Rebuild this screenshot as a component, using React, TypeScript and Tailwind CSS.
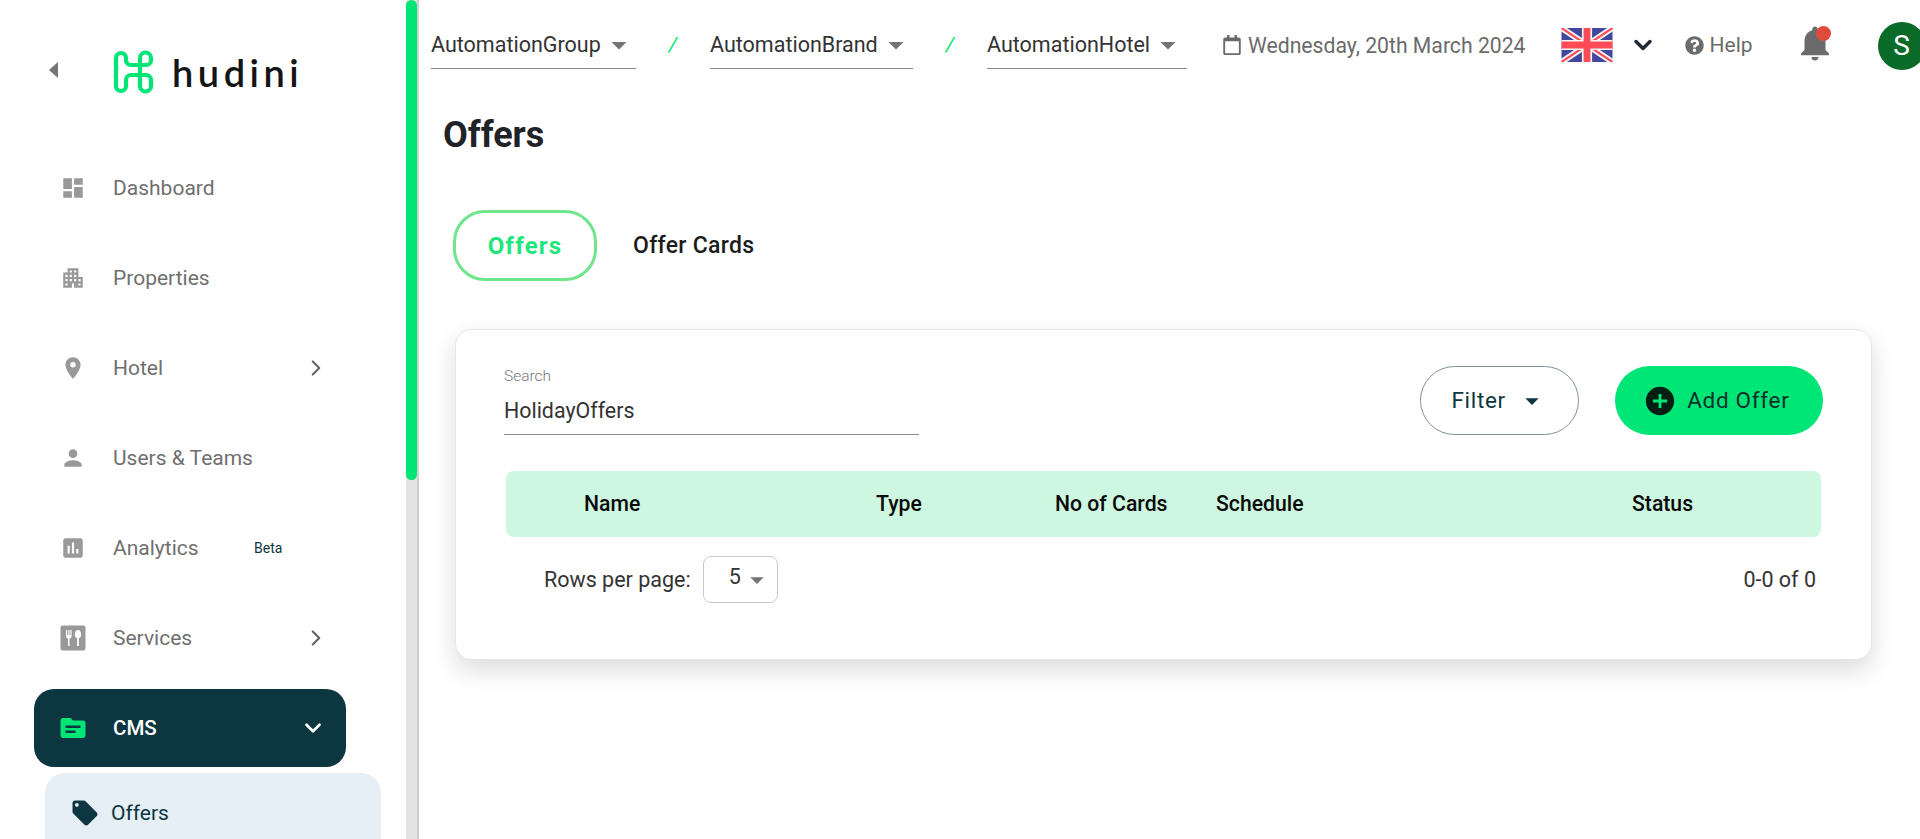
import React from "react";
import { ChevronDown, ChevronRight } from "lucide-react";
import {
  MdAddCircle,
  MdApartment,
  MdArrowDropDown,
  MdAssessment,
  MdDashboard,
  MdLocalOffer,
  MdLocationOn,
  MdNotifications,
  MdPerson,
  MdTopic,
} from "react-icons/md";
import { FaQuestionCircle, FaRegCalendar } from "react-icons/fa";

function ServicesIcon() {
  return (
    <svg viewBox="0 0 26 26" width="26" height="26">
      <rect x="0.5" y="0.5" width="25" height="25" rx="2" fill="#999" />
      <path d="M6 5v6c0 1.400 1 2.200 2 2.400V21h1.600v-7.600c1-.2 2-1 2-2.400V5h-1.200v5H9.500V5H8.300v5H7.200V5z" fill="#fff" />
      <path d="M18 5c-1.900 0-3.200 2-3.200 4.400 0 1.900.9 3.400 2.300 3.900V21h1.800v-7.700c1.400-.5 2.300-2 2.300-3.900C21.200 7 19.900 5 18 5z" fill="#fff" />
    </svg>
  );
}

function UkFlag() {
  return (
    <svg viewBox="0 0 60 40" className="h-[34px] w-[52px]">
      <rect width="60" height="40" rx="2" fill="#41479b" />
      <path d="M0 0L60 40M60 0L0 40" stroke="#f5f5f5" strokeWidth="7" />
      <path d="M0 0L60 40M60 0L0 40" stroke="#ff4b55" strokeWidth="2.500" />
      <path d="M30 0V40M0 20H60" stroke="#f5f5f5" strokeWidth="12" />
      <path d="M30 0V40M0 20H60" stroke="#ff4b55" strokeWidth="8" />
    </svg>
  );
}

function Logo() {
  return (
    <svg viewBox="0 0 50 60" className="h-[60px] w-[50px]">
      <path
        d="M8 16V44a5 5 0 0 0 10 0V38a5 5 0 0 1 5-5H38a5 5 0 0 1 5 5V44a5.500 5.500 0 0 1-11 0V16a5.500 5.500 0 0 1 11 0V18a5 5 0 0 1-5 5H23a5 5 0 0 1-5-5V16a5 5 0 0 0-10 0z"
        fill="none"
        stroke="#00e676"
        strokeWidth="4.200"
      />
    </svg>
  );
}

function NavItem({ icon, label, badge, arrow }: { icon: React.ReactNode; label: string; badge?: string; arrow?: boolean }) {
  return (
    <div className="flex h-[90px] shrink-0 items-center pl-[60px] text-[#6f6f6f]">
      <div className="flex w-[26px] justify-center text-[#999]">{icon}</div>
      <span className="ml-[27px] w-[140px] pt-[1px] text-[21px]">{label}</span>
      {badge && <span className="ml-[1px] text-[14px] text-[#0c3640]">{badge}</span>}
      {arrow && <ChevronRight size={26} strokeWidth={2} className="ml-[50px] text-[#666]" />}
    </div>
  );
}

function TopSelect({ label, width }: { label: string; width: string }) {
  return (
    <div className={`flex h-[48px] shrink-0 items-center justify-start whitespace-nowrap border-b border-[#8c8c8c] ${width}`}>
      <span className="pt-[2px] text-[21.500px] text-[#333]">{label}</span>
      <MdArrowDropDown size={36} className="shrink-0 text-[#757575]" />
    </div>
  );
}

const Slash = () => <span className="w-[74px] shrink-0 self-center pt-[22px] text-center text-[21px] italic text-[#00e676]">/</span>;

export default function App() {
  return (
    <div className="flex h-[839px] w-[1920px] overflow-hidden bg-white font-['Roboto',sans-serif]">
      <aside className="flex w-[406px] shrink-0 flex-col">
        <div className="flex h-[143px] shrink-0 items-start pl-[49px] pt-[42px]">
          <div className="mt-[20px] h-0 w-0 border-y-[8px] border-r-[9px] border-y-transparent border-r-[#757575]" />
          <div className="ml-[50px]">
            <Logo />
          </div>
          <span className="ml-[14px] mt-[7px] font-['Lato',sans-serif] text-[38px] font-semibold leading-[46px] tracking-[4.500px] text-[#141414]">hudini</span>
        </div>
        <NavItem icon={<MdDashboard size={32} />} label="Dashboard" />
        <NavItem icon={<MdApartment size={32} />} label="Properties" />
        <NavItem icon={<MdLocationOn size={32} />} label="Hotel" arrow />
        <NavItem icon={<MdPerson size={32} />} label="Users & Teams" />
        <NavItem icon={<MdAssessment size={32} />} label="Analytics" badge="Beta" />
        <NavItem icon={<ServicesIcon />} label="Services" arrow />
        <div className="ml-[34px] mt-[6px] flex h-[78px] w-[312px] shrink-0 items-center rounded-[20px] bg-[#0c3640] pl-[24px] text-white">
          <div className="flex w-[30px] justify-center text-[#00e676]">
            <MdTopic size={32} />
          </div>
          <span className="ml-[25px] w-[187px] text-[20.500px] font-medium">CMS</span>
          <ChevronDown size={26} strokeWidth={2.500} />
        </div>
        <div className="ml-[45px] mt-[6px] flex h-[80px] w-[336px] shrink-0 items-center rounded-t-[20px] bg-[#e6eef6] pl-[25px] text-[#0c3640]">
          <MdLocalOffer size={30} />
          <span className="ml-[11px] pt-[1px] text-[21px]">Offers</span>
        </div>
      </aside>

      <div className="flex w-[13px] shrink-0 flex-col border-r-2 border-[#cfcfcf] bg-[#e3e3e3]">
        <div className="h-[480px] rounded-full bg-[#00e676]" />
      </div>

      <main className="min-w-0 flex-1">
        <header className="flex h-[69px] items-end pl-[12px]">
          <TopSelect label="AutomationGroup" width="w-[205px]" />
          <Slash />
          <TopSelect label="AutomationBrand" width="w-[203px]" />
          <Slash />
          <TopSelect label="AutomationHotel" width="w-[200px]" />
          <div className="ml-[35px] flex h-[48px] shrink-0 items-center whitespace-nowrap text-[#6b6b6b]">
            <FaRegCalendar size={20} />
            <span className="ml-[6px] pt-[2px] text-[21.200px]">Wednesday, 20th March 2024</span>
          </div>
          <div className="ml-[35px] flex h-[48px] shrink-0 items-center">
            <UkFlag />
            <ChevronDown size={28} strokeWidth={3} className="ml-[16px] text-[#1f2933]" />
          </div>
          <div className="ml-[28px] flex h-[48px] shrink-0 items-center text-[#6b6b6b]">
            <FaQuestionCircle size={19} />
            <span className="ml-[6px] pt-[2px] text-[21px]">Help</span>
          </div>
          <div className="relative mb-[2px] ml-[41px] flex h-[48px] shrink-0 items-center text-[#6b6b6b]">
            <MdNotifications size={42} />
            <span className="absolute right-[5px] top-[7px] h-[15px] w-[15px] rounded-full bg-[#e04a3a]" />
          </div>
          <div className="mb-[-1px] ml-[42px] flex h-[48px] w-[48px] shrink-0 items-center justify-center rounded-full bg-[#0a6b28] text-[28px] text-white">S</div>
        </header>

        <h1 className="ml-[24px] mt-[45px] text-[36px] font-bold leading-[42px] text-[#1f2328]">Offers</h1>

        <div className="ml-[34px] mt-[54px] flex items-center">
          <div className="flex h-[71px] w-[144px] items-center justify-center rounded-[32px] border-[3px] border-[#6fe58c] text-[24px] font-bold tracking-[1.200px] text-[#1fe67c]">Offers</div>
          <span className="ml-[36px] pt-[2px] text-[23px] font-medium tracking-[0.3px] text-[#1c1c1c]">Offer Cards</span>
        </div>

        <section className="ml-[36px] mt-[48px] h-[331px] w-[1417px] rounded-[16px] border border-[#e6e6e6] bg-white px-[48px] pt-[36px] shadow-[0_10px_24px_rgba(0,0,0,0.14)]">
          <div className="flex items-start">
            <div className="w-[418px] border-b border-[#8c8c8c]">
              <div className="text-[15.500px] font-light leading-[20px] text-[#777]">Search</div>
              <div className="mt-[10px] h-[38px] text-[21.400px] leading-[30px] text-[#333]">HolidayOffers</div>
            </div>
            <div className="ml-[501px] flex h-[69px] w-[160px] items-center justify-center rounded-[35px] border border-[#7c919a] text-[22.500px] tracking-[0.7px] text-[#0c3640]">
              Filter
              <MdArrowDropDown size={32} className="ml-[10px]" />
            </div>
            <div className="ml-[36px] flex h-[69px] w-[209px] items-center rounded-[35px] bg-[#00e676] pl-[28px] text-[22.500px] tracking-[0.7px] text-[#0b2f2c]">
              <MdAddCircle size={34} className="mr-[10px] text-[#021f14]" />
              Add Offer
            </div>
          </div>

          <div className="ml-[2px] mt-[36px] flex h-[66px] w-[1315px] items-center rounded-[8px] bg-[#cdf7e0] text-[21.200px] font-medium text-[#0a0a0a]">
            <span className="ml-[78px] w-[292px]">Name</span>
            <span className="w-[179px]">Type</span>
            <span className="w-[161px]">No of Cards</span>
            <span className="w-[416px]">Schedule</span>
            <span>Status</span>
          </div>

          <div className="mt-[19px] flex h-[47px] items-center text-[21.500px] text-[#333]">
            <span className="ml-[40px] pt-[2px]">Rows per page:</span>
            <div className="ml-[12px] flex h-[47px] w-[75px] items-center rounded-[8px] border border-[#c9c9c9] pl-[25px]">
              <span className="-mt-1">5</span>
              <MdArrowDropDown size={32} className="text-[#757575]" />
            </div>
            <span className="ml-auto mr-[7px] pt-[2px]">0-0 of 0</span>
          </div>
        </section>
      </main>
    </div>
  );
}
